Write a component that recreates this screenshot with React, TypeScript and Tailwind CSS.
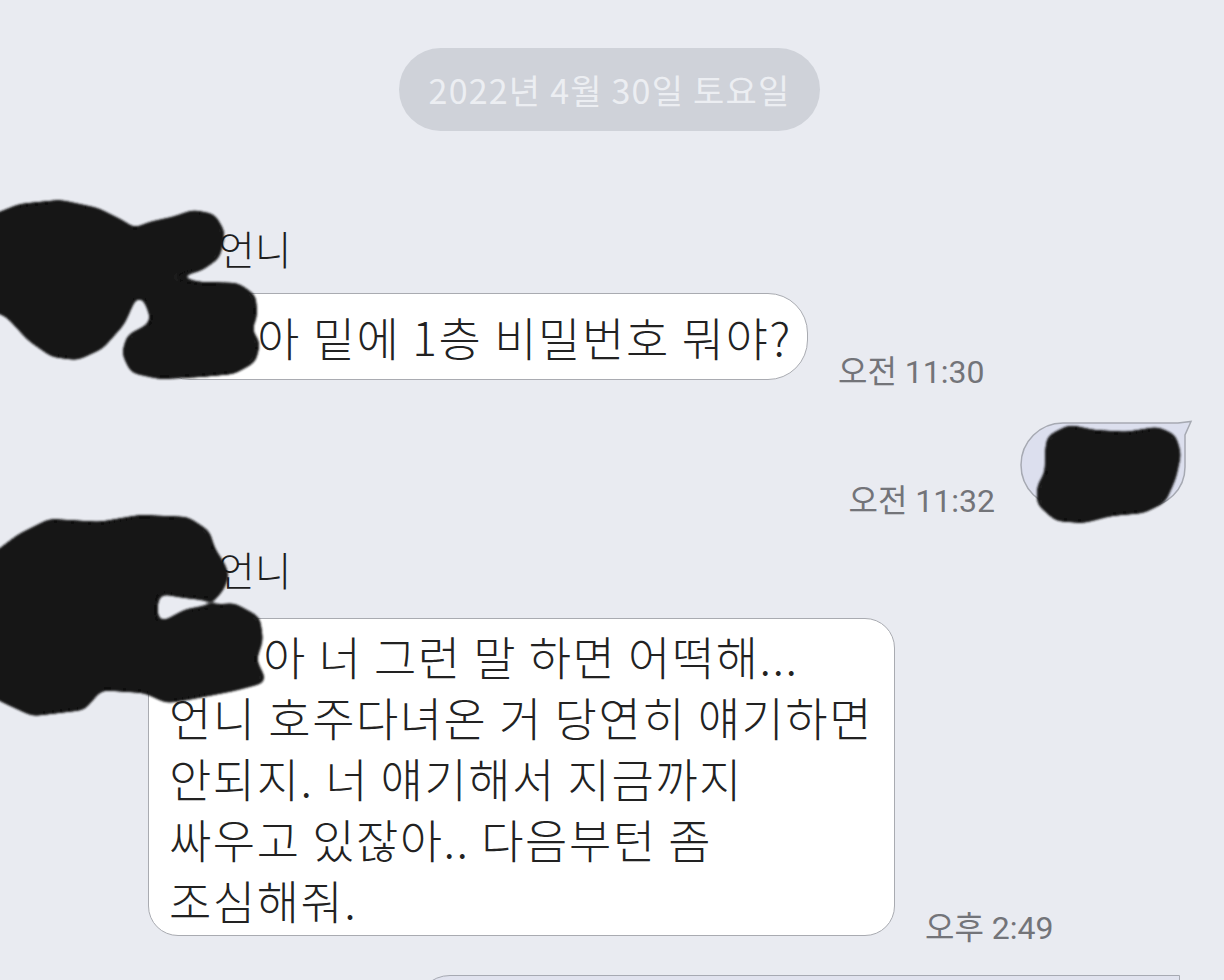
import React from "react";

const KR = { fontFamily: "'Noto Sans CJK KR', 'Noto Sans', sans-serif" };
const TIME = { fontFamily: "Roboto, 'Noto Sans CJK KR', sans-serif" };

function Blobs() {
  return (
    <svg
      className="absolute left-0 top-0 pointer-events-none"
      width={1224}
      height={980}
      viewBox="0 0 1224 980"
    >
      <defs>
        <filter id="goo" x="-10%" y="-10%" width="120%" height="120%">
          <feGaussianBlur in="SourceGraphic" stdDeviation="5" result="b" />
          <feColorMatrix
            in="b"
            type="matrix"
            values="1 0 0 0 0  0 1 0 0 0  0 0 1 0 0  0 0 0 24 -11"
            result="g"
          />
          <feGaussianBlur in="g" stdDeviation="0.8" />
        </filter>
      </defs>
      <g filter="url(#goo)">
        <g fill="#151515" stroke="#151515" strokeWidth={6} strokeLinejoin="round">
          <path d="M-20,223 L0,215 L20,207 L60,203 L97,211 L123,224 L142,238 L144,262 L138,286 L122,322 L101,346 L77,357 L53,354 L30,338 L8,314 L-20,303 Z" />
          <path d="M128,234 L150,225 L173,220 L193,213 L213,217 L222,233 L217,256 L200,268 L173,273 L146,274 L132,262 Z" />
          <path d="M130,250 L160,255 L165,290 L150,300 L135,290 Z" />
          <path d="M148,285 L158,279 L200,285 L237,286 L253,297 L254,317 L248,330 L257,343 L253,360 L233,371 L200,374 L160,376 L133,370 L125,353 L130,337 L150,327 L154,318 L147,300 Z" />
          <path d="M-20,567 L20,537 L50,522 L100,525 L140,518 L187,520 L207,533 L212,550 L222,565 L226,576 L220,590 L213,597 L185,595 L157,590 L154,610 L157,628 L187,612 L233,606 L257,619 L260,640 L253,660 L263,680 L233,688 L187,697 L167,700 L145,690 L100,687 L83,707 L33,713 L7,701 L-20,687 Z" />
          <path d="M1050,438 L1070,428 L1093,433 L1127,435 L1157,430 L1173,437 L1178,454 L1173,477 L1163,500 L1143,510 L1110,513 L1083,520 L1057,518 L1040,503 L1040,487 L1048,473 L1048,453 Z" />
        </g>
      </g>
    </svg>
  );
}

function Time({ children }: { children: React.ReactNode }) {
  return (
    <div
      className="text-[32px] leading-none text-[#737479] mb-[-8px] whitespace-nowrap"
      style={TIME}
    >
      {children}
    </div>
  );
}

export default function App() {
  return (
    <div
      className="relative w-[1224px] h-[980px] overflow-hidden bg-[#e9ebf1]"
      style={KR}
    >
      <div className="flex flex-col">
        {/* date pill */}
        <div className="flex justify-center pt-[48px] pr-[5px]">
          <div className="w-[421px] h-[83px] rounded-full bg-[#cfd2d9] flex items-center justify-center text-[34px] tracking-[1.2px] text-[#eceef2]">
            2022년 4월 30일 토요일
          </div>
        </div>

        {/* label 1 */}
        <div className="pl-[218px] mt-[94px] text-[40px] leading-[46px] font-light text-[#1e1e1e]">
          언니
        </div>

        {/* bubble 1 */}
        <div className="flex items-end pl-[150px] mt-[22px]">
          <div className="w-[658px] h-[87px] rounded-[40px] bg-white border-[1.5px] border-[#a9abb1] flex items-center pl-[106px] text-[46px] font-light tracking-[1.6px] text-[#222] whitespace-nowrap">
            아 밑에 1층 비밀번호 뭐야?
          </div>
          <div className="ml-[30px]">
            <Time>오전 11:30</Time>
          </div>
        </div>

        {/* my bubble */}
        <div className="flex items-end justify-end pr-[31px] mt-[40px]">
          <div className="mr-[25px]">
            <Time>오전 11:32</Time>
          </div>
          <svg width={173} height={89} viewBox="0 0 173 89">
            <path
              d="M43,3 L158,3 L171,1.5 L165,15 L165,47 A40,40 0 0 1 125,87 L43,87 A42,42 0 0 1 43,3 Z"
              fill="#dcdfee"
              stroke="#a6a9b2"
              strokeWidth={1.5}
            />
          </svg>
        </div>

        {/* label 2 */}
        <div className="pl-[218px] mt-[37px] text-[40px] leading-[46px] font-light text-[#1e1e1e]">
          언니
        </div>

        {/* bubble 3 */}
        <div className="flex items-end pl-[148px] mt-[26px]">
          <div className="w-[747px] h-[318px] rounded-[30px] bg-white border-[1.5px] border-[#a9abb1] pl-[20px] pt-[6px] text-[46px] font-light tracking-[1.5px] leading-[61px] text-[#222] whitespace-nowrap">
            <div className="pl-[94px]">아 너 그런 말 하면 어떡해...</div>
            <div>언니 호주다녀온 거 당연히 얘기하면</div>
            <div>안되지. 너 얘기해서 지금까지</div>
            <div>싸우고 있잖아.. 다음부턴 좀</div>
            <div>조심해줘.</div>
          </div>
          <div className="ml-[30px]">
            <Time>오후 2:49</Time>
          </div>
        </div>

        {/* bottom bubble */}
        <div className="flex justify-end pr-[44px] mt-[39px]">
          <div className="w-[765px] h-[70px] rounded-[36px] rounded-tr-none bg-[#e0e2ee] border-[1.5px] border-[#a6a9b2]" />
        </div>
      </div>

      <Blobs />
    </div>
  );
}
